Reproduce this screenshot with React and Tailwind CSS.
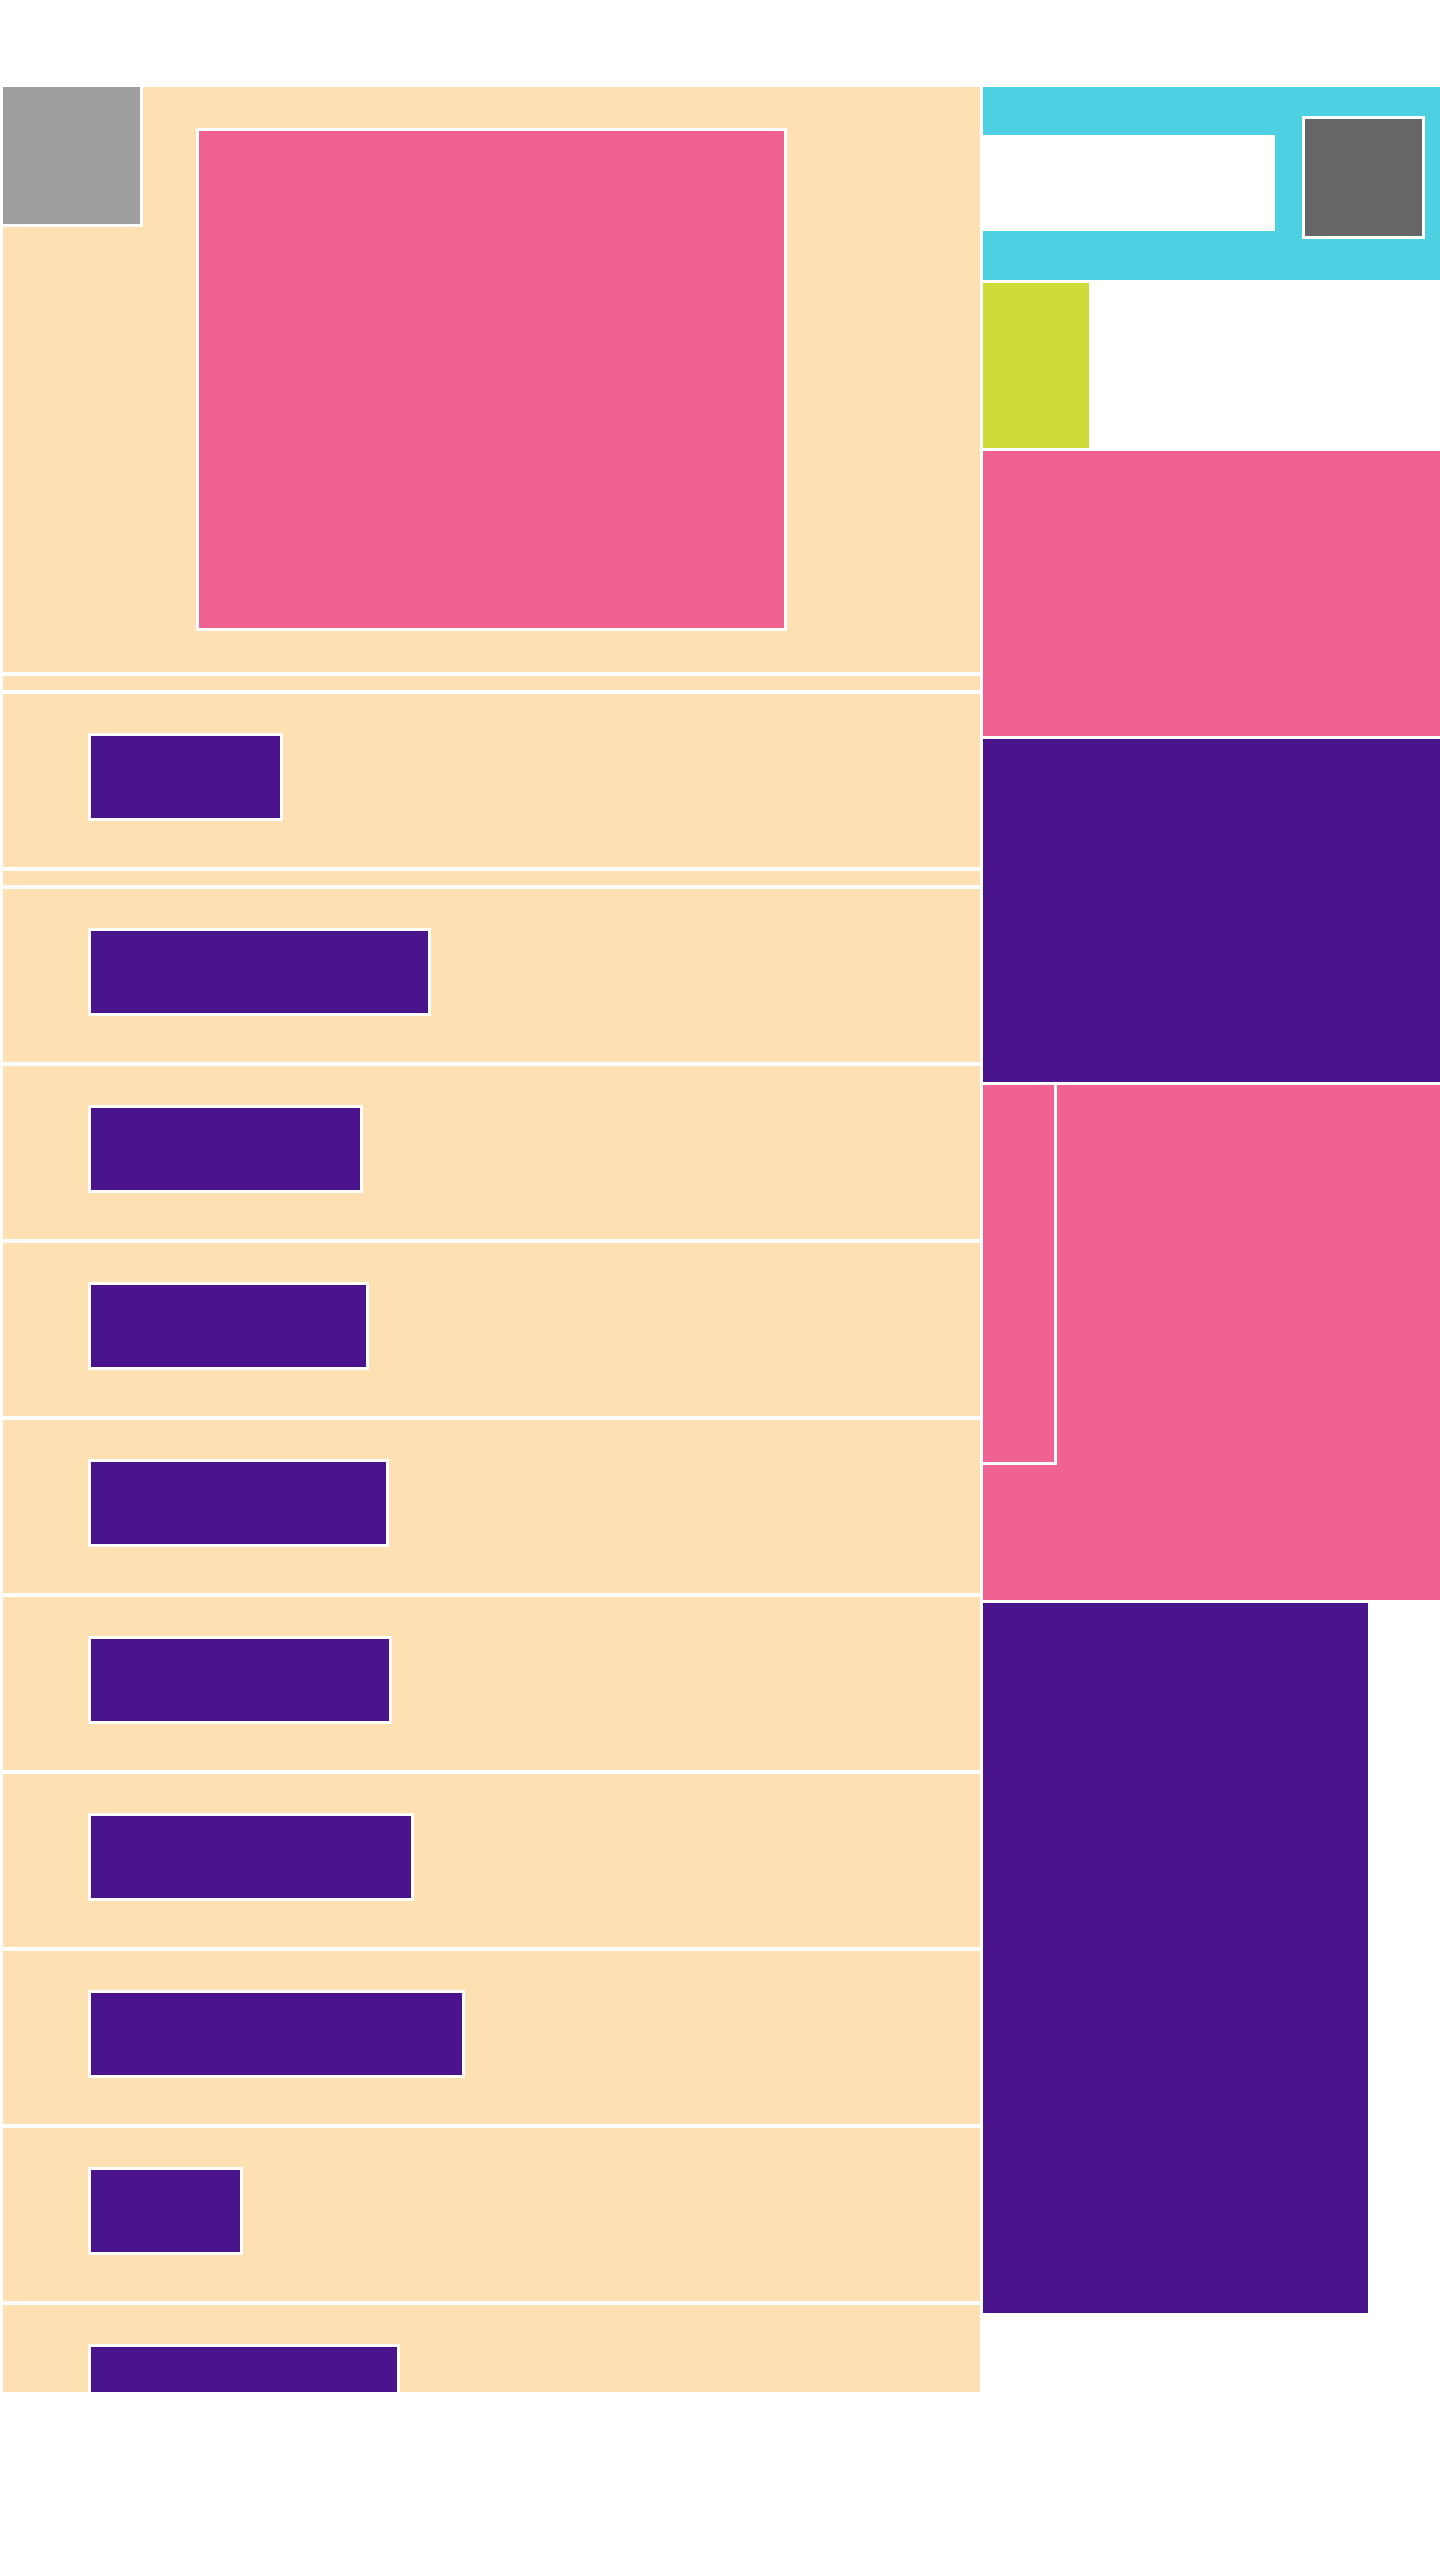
const itemWidths = [189, 337, 269, 275, 295, 298, 320, 371, 149, 306];

function ItemRow({ width }) {
  return (
    <div className="h-[173px] shrink-0 bg-[#ffe0b2] pl-[88px] pt-[42px]">
      <div className="h-[82px] bg-[#4a148c] outline-[3px] outline-white" style={{ width }} />
    </div>
  );
}

function ThinRow() {
  return <div className="h-[14px] shrink-0 bg-[#ffe0b2]" />;
}

function LeftColumn() {
  return (
    <div className="flex h-[2305px] w-[977px] shrink-0 flex-col gap-[4px] overflow-hidden">
      <div className="flex h-[585px] shrink-0 items-start bg-[#ffe0b2]">
        <div className="h-[140px] w-[140px] border-r-[3px] border-b-[3px] border-white bg-[#9e9e9e]" />
        <div className="ml-[53px] mt-[41px] h-[503px] w-[591px] border-[3px] border-white bg-[#f06292]" />
      </div>
      <ThinRow />
      <ItemRow width={itemWidths[0]} />
      <ThinRow />
      {itemWidths.slice(1).map((w, i) => (
        <ItemRow key={i} width={w} />
      ))}
    </div>
  );
}

function RightColumn() {
  return (
    <div className="flex w-[457px] shrink-0 flex-col gap-[3px]">
      <div className="flex h-[193px] items-start bg-[#4dd0e1]">
        <div className="mt-[48px] h-[96px] w-[292px] bg-white" />
        <div className="ml-[27px] mt-[29px] h-[123px] w-[123px] border-[3px] border-white bg-[#666666]" />
      </div>
      <div className="h-[165px] w-[106px] bg-[#cddc39]" />
      <div className="h-[285px] bg-[#f06292]" />
      <div className="h-[343px] bg-[#4a148c]" />
      <div className="h-[515px] bg-[#f06292]">
        <div className="h-[380px] w-[74px] border-r-[3px] border-b-[3px] border-white" />
      </div>
      <div className="h-[710px] w-[385px] bg-[#4a148c]" />
    </div>
  );
}

export default function App() {
  return (
    <div className="min-h-[2560px] bg-white">
      <div className="flex items-start gap-[3px] pl-[3px] pt-[87px]">
        <LeftColumn />
        <RightColumn />
      </div>
    </div>
  );
}
